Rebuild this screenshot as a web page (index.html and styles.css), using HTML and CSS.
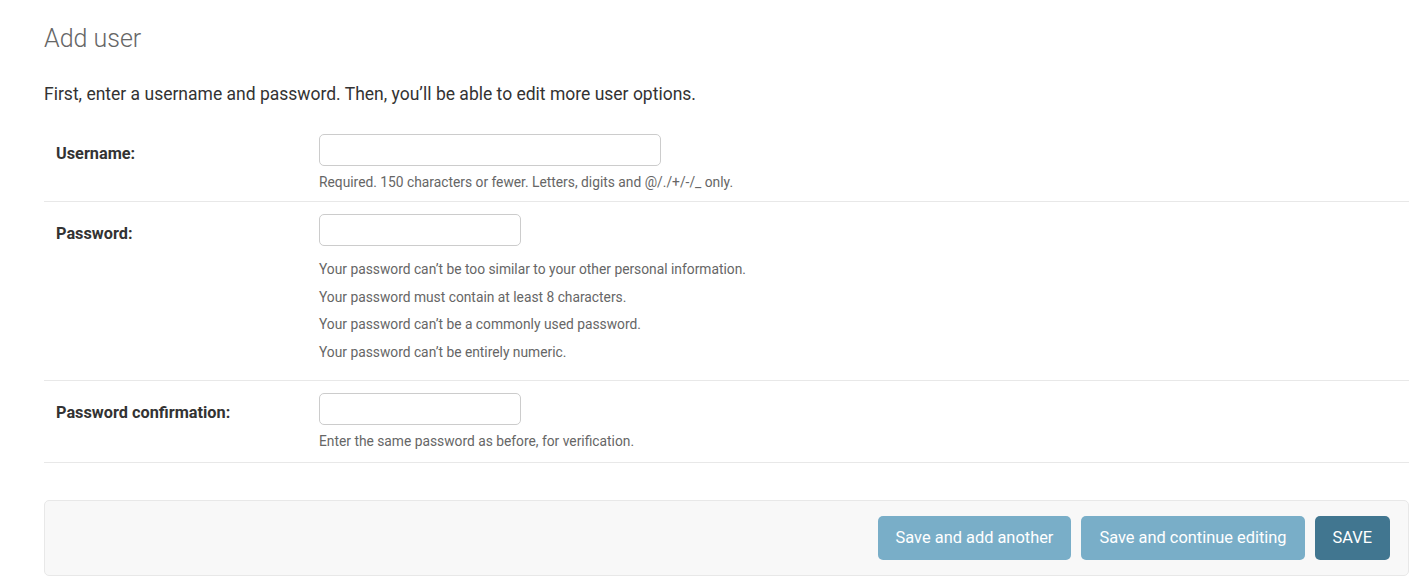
FILE: index.html
```html
<!DOCTYPE html>
<html lang="en">
<head>
<meta charset="utf-8">
<title>Add user</title>
<link rel="stylesheet" href="styles.css">
</head>
<body>
<div class="content">
  <h1 class="title">Add user</h1>
  <p class="intro">First, enter a username and password. Then, you’ll be able to edit more user options.</p>
  <form class="form">
    <fieldset class="fieldset">
      <div class="row">
        <label class="label" for="u">Username:</label>
        <div class="field">
          <input class="input input-wide" id="u" type="text">
          <div class="help">Required. 150 characters or fewer. Letters, digits and @/./+/-/_ only.</div>
        </div>
      </div>
      <div class="row">
        <label class="label" for="p1">Password:</label>
        <div class="field">
          <input class="input" id="p1" type="password">
          <ul class="help-list">
            <li>Your password can’t be too similar to your other personal information.</li>
            <li>Your password must contain at least 8 characters.</li>
            <li>Your password can’t be a commonly used password.</li>
            <li>Your password can’t be entirely numeric.</li>
          </ul>
        </div>
      </div>
      <div class="row row-last">
        <label class="label" for="p2">Password confirmation:</label>
        <div class="field">
          <input class="input" id="p2" type="password">
          <div class="help">Enter the same password as before, for verification.</div>
        </div>
      </div>
    </fieldset>
    <div class="submit-row">
      <button type="button" class="btn">Save and add another</button>
      <button type="button" class="btn">Save and continue editing</button>
      <button type="button" class="btn btn-default">SAVE</button>
    </div>
  </form>
</div>
</body>
</html>
```
FILE: styles.css
```css
* { box-sizing: border-box; }
html, body { margin: 0; padding: 0; background: #fff; }
body {
  font-family: Roboto, "Liberation Sans", Arial, sans-serif;
  color: #333;
  font-size: 16.8px;
}
.content {
  padding: 0 1px 0 44px;
}
.title {
  margin: 25px 0 0;
  font-size: 25px;
  line-height: 28px;
  font-weight: 300;
  color: #666;
}
.intro {
  margin: 31px 0 18px;
  font-size: 17.5px;
  line-height: 20px;
  color: #333;
}
.form { margin: 0; }
.fieldset {
  margin: 0 0 37px;
  padding: 0;
  border: 0;
  min-width: 0;
}
.row {
  display: flex;
  padding: 12px;
  border-bottom: 1px solid #e8e8e8;
}
.row-last { padding-bottom: 13px; }
.label {
  flex: 0 0 263px;
  padding-top: 10px;
  font-weight: 700;
  font-size: 16.3px;
  line-height: 20px;
  color: #333;
}
.field {
  display: flex;
  flex-direction: column;
  align-items: flex-start;
}
.input {
  display: block;
  width: 202px;
  height: 32px;
  border: 1px solid #ccc;
  border-radius: 5px;
  padding: 4px 6px;
  font: inherit;
  background: #fff;
  outline: none;
}
.input-wide { width: 342px; }
.help {
  margin-top: 8px;
  font-size: 13.8px;
  line-height: 16px;
  color: #666;
}
.row:first-child { padding-bottom: 11px; }
.help-list {
  list-style: none;
  margin: 10px 0 0;
  padding: 0 0 2px;
  font-size: 13.8px;
  line-height: 27.5px;
  color: #666;
}
.submit-row {
  display: flex;
  justify-content: flex-end;
  gap: 10px;
  padding: 15px 18px 15px 17px;
  background: #f8f8f8;
  border: 1px solid #e8e8e8;
  border-radius: 5px;
}
.btn {
  height: 44px;
  padding: 0 18px;
  border: 0;
  border-radius: 5px;
  background: #79aec8;
  color: #fff;
  font-family: Roboto, "Liberation Sans", Arial, sans-serif;
  font-size: 16.4px;
  line-height: 20px;
  cursor: pointer;
}
.btn-default { background: #417690; }
```
